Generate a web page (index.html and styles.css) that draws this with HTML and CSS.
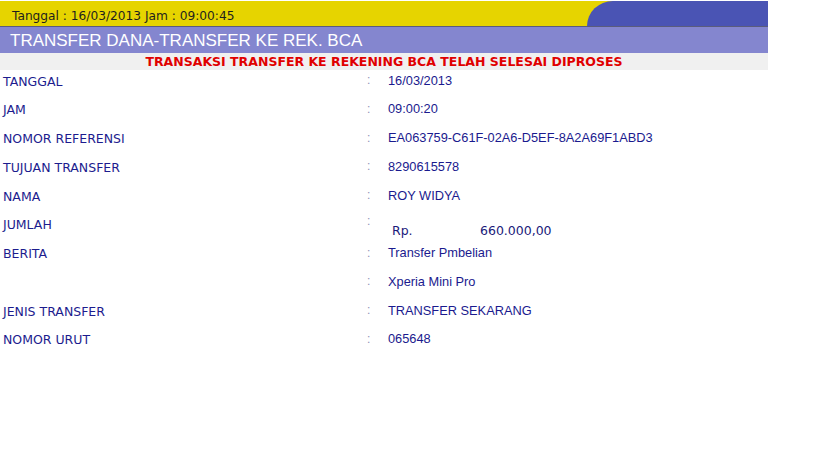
FILE: index.html
```html
<!DOCTYPE html>
<html>
<head>
<meta charset="utf-8">
<link rel="stylesheet" href="styles.css">
</head>
<body>
<div class="page">
  <div class="topbar">
    <div class="topbar-date">Tanggal : 16/03/2013 Jam : 09:00:45</div>
    <div class="topbar-swoosh"></div>
  </div>
  <div class="title">TRANSFER DANA-TRANSFER KE REK. BCA</div>
  <div class="notice">TRANSAKSI TRANSFER KE REKENING BCA TELAH SELESAI DIPROSES</div>
  <div class="details">
    <div class="lbl">TANGGAL</div><div class="col">:</div><div class="val">16/03/2013</div>
    <div class="lbl">JAM</div><div class="col">:</div><div class="val">09:00:20</div>
    <div class="lbl">NOMOR REFERENSI</div><div class="col">:</div><div class="val">EA063759-C61F-02A6-D5EF-8A2A69F1ABD3</div>
    <div class="lbl">TUJUAN TRANSFER</div><div class="col">:</div><div class="val">8290615578</div>
    <div class="lbl">NAMA</div><div class="col">:</div><div class="val">ROY WIDYA</div>
    <div class="lbl">JUMLAH</div><div class="col col-top">:</div><div class="val amount"><span class="cur">Rp.</span><span class="num">660.000,00</span></div>
    <div class="lbl">BERITA</div><div class="col">:</div><div class="val">Transfer Pmbelian</div>
    <div class="lbl"></div><div class="col">:</div><div class="val">Xperia Mini Pro</div>
    <div class="lbl">JENIS TRANSFER</div><div class="col">:</div><div class="val">TRANSFER SEKARANG</div>
    <div class="lbl">NOMOR URUT</div><div class="col">:</div><div class="val">065648</div>
  </div>
</div>
</body>
</html>
```
FILE: styles.css
```css
html, body {
  margin: 0;
  padding: 0;
  background: #ffffff;
}
.page {
  width: 768px;
  padding-top: 1px;
}
.topbar {
  display: flex;
  height: 25px;
  background: #e6d400;
  border-bottom: 1px solid #5a5c7c;
}
.topbar-date {
  flex: 1;
  padding-left: 12px;
  font-family: "DejaVu Sans", Verdana, sans-serif;
  font-size: 12.2px;
  line-height: 31px;
  color: #1e1e1e;
  white-space: nowrap;
}
.topbar-swoosh {
  width: 181px;
  background: #4a54b4;
  border-top-left-radius: 27px 26px;
}
.title {
  height: 26px;
  background: #8486cf;
  color: #ffffff;
  font-family: "Liberation Sans", Arial, sans-serif;
  font-size: 17px;
  line-height: 27px;
  padding-left: 10px;
  white-space: nowrap;
}
.notice {
  height: 17px;
  background: #f0f0f0;
  color: #e00000;
  font-family: "DejaVu Sans", Verdana, sans-serif;
  font-weight: bold;
  font-size: 12.5px;
  line-height: 18px;
  text-align: center;
  white-space: nowrap;
}
.details {
  display: grid;
  grid-template-columns: 364px 24px 1fr;
  grid-auto-rows: 28.75px;
  align-items: start;
}
.lbl {
  padding: 3.5px 0 0 3px;
  font-family: "DejaVu Sans", Verdana, sans-serif;
  font-size: 12.5px;
  line-height: 15px;
  color: #1c1c8e;
  white-space: nowrap;
}
.col {
  padding: 3px 0 0 3px;
  font-family: "Liberation Sans", Arial, sans-serif;
  font-size: 12px;
  line-height: 15px;
  color: #9090b8;
}
.col-top {
  padding-top: 0;
}
.val {
  padding-top: 2.5px;
  font-family: "Liberation Sans", Arial, sans-serif;
  font-size: 12.8px;
  line-height: 15px;
  color: #1a1a8e;
  white-space: nowrap;
}
.amount {
  display: flex;
  padding-top: 9px;
  font-family: "DejaVu Sans", Verdana, sans-serif;
  font-size: 12.5px;
  color: #1a1a7a;
}
.cur {
  width: 88px;
  padding-left: 4px;
}
```
